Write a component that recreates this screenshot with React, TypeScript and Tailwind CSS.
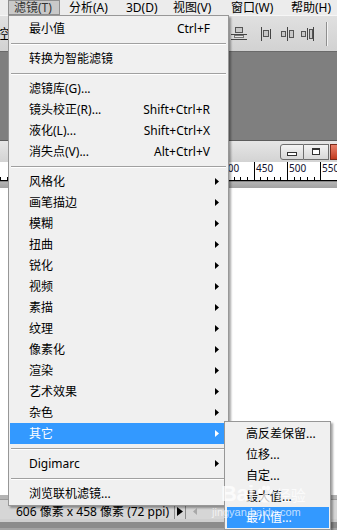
import React from 'react';

type Entry =
  | { label: string; shortcut?: string; arrow?: boolean; active?: boolean }
  | 'sep';

const filterMenu: Entry[] = [
  { label: '最小值', shortcut: 'Ctrl+F' },
  'sep',
  { label: '转换为智能滤镜' },
  'sep',
  { label: '滤镜库(G)...' },
  { label: '镜头校正(R)...', shortcut: 'Shift+Ctrl+R' },
  { label: '液化(L)...', shortcut: 'Shift+Ctrl+X' },
  { label: '消失点(V)...', shortcut: 'Alt+Ctrl+V' },
  'sep',
  { label: '风格化', arrow: true },
  { label: '画笔描边', arrow: true },
  { label: '模糊', arrow: true },
  { label: '扭曲', arrow: true },
  { label: '锐化', arrow: true },
  { label: '视频', arrow: true },
  { label: '素描', arrow: true },
  { label: '纹理', arrow: true },
  { label: '像素化', arrow: true },
  { label: '渲染', arrow: true },
  { label: '艺术效果', arrow: true },
  { label: '杂色', arrow: true },
  { label: '其它', arrow: true, active: true },
  'sep',
  { label: 'Digimarc', arrow: true },
  'sep',
  { label: '浏览联机滤镜...' },
];

const otherMenu = ['高反差保留...', '位移...', '自定...', '最大值...', '最小值...'];

function Arrow({ white }: { white?: boolean }) {
  return (
    <svg width="4" height="7" viewBox="0 0 4 7" className="ml-[5px]">
      <polygon points="0,0 4,3.5 0,7" fill={white ? '#ffffff' : '#000000'} />
    </svg>
  );
}

function MenuRow({ item }: { item: Exclude<Entry, 'sep'> }) {
  return (
    <div
      className={`mx-[1px] flex h-[21px] items-center pl-[19px] ${
        item.active ? 'bg-[#3399ff] text-white' : 'text-black'
      }`}
    >
      <span className="flex-1 whitespace-nowrap">{item.label}</span>
      {item.shortcut && <span className="whitespace-nowrap">{item.shortcut}</span>}
      <span className="flex w-[17px] items-center">{item.arrow && <Arrow white={item.active} />}</span>
    </div>
  );
}

function Separator() {
  return (
    <div className="flex h-[9px] items-start px-[2px] pt-[4px]">
      <div className="h-[2px] w-full border-t border-b border-t-[#a0a0a0] border-b-white" />
    </div>
  );
}

function ToolIcons() {
  return (
    <div className="ml-auto flex items-center">
      <svg width="16" height="14" viewBox="0 0 16 14" className="mr-[13px]">
        <rect x="4.5" y="0.5" width="7" height="5" fill="#c8c8c8" stroke="#555" />
        <line x1="0" y1="7.5" x2="16" y2="7.5" stroke="#444" />
        <rect x="3.5" y="8.5" width="9" height="2" fill="#e8e8e8" stroke="#777" />
        <line x1="0" y1="12.5" x2="16" y2="12.5" stroke="#444" />
      </svg>
      <svg width="13" height="14" viewBox="0 0 13 14" className="mr-[8px]">
        <line x1="1.5" y1="0" x2="1.5" y2="14" stroke="#444" />
        <rect x="3.5" y="3.5" width="5" height="6" fill="#c8c8c8" stroke="#555" />
        <line x1="10.5" y1="2" x2="10.5" y2="12" stroke="#444" />
      </svg>
      <svg width="13" height="14" viewBox="0 0 13 14" className="mr-[7px]">
        <rect x="0.5" y="4.5" width="4" height="5" fill="#c8c8c8" stroke="#555" />
        <line x1="6.5" y1="0" x2="6.5" y2="14" stroke="#444" />
        <rect x="8.5" y="3.5" width="4" height="7" fill="#c8c8c8" stroke="#555" />
      </svg>
      <svg width="13" height="14" viewBox="0 0 13 14" className="mr-[12px]">
        <rect x="0.5" y="4.5" width="4" height="5" fill="#c8c8c8" stroke="#555" />
        <line x1="6.5" y1="1" x2="6.5" y2="13" stroke="#444" />
        <rect x="8.5" y="2.5" width="3" height="9" fill="#c8c8c8" stroke="#555" />
        <line x1="12.5" y1="0" x2="12.5" y2="14" stroke="#444" />
      </svg>
      <div className="h-[24px] w-[2px] border-l border-r border-l-[#8e8e8e] border-r-[#f4f4f4]" />
      <div className="w-[9px]" />
    </div>
  );
}

function Ruler() {
  const majors = [0, 1, 2, 3].map((k) => 220.3 + k * 33.33);
  const labels = ['400', '450', '500', '550'];
  const minors: number[] = [];
  for (let x = 0; x < 337; x += 6.666) minors.push(x + 220.3 - 33.33 * 7);
  return (
    <svg width="337" height="19" viewBox="0 0 337 19" className="block">
      <rect width="337" height="19" fill="#ffffff" />
      {minors.map((x, i) => (
        <line key={i} x1={Math.round(x) + 0.5} y1={i % 5 === 0 ? 0 : 15} x2={Math.round(x) + 0.5} y2="19" stroke="#000" />
      ))}
      {majors.map((x, i) => (
        <text key={i} x={Math.round(x) + 2} y="10" fontSize="10" fill="#101030" fontFamily="'Noto Sans', sans-serif">
          {labels[i]}
        </text>
      ))}
      <line x1="0" y1="18.5" x2="337" y2="18.5" stroke="#000" />
    </svg>
  );
}

export default function App() {
  return (
    <div
      className="relative h-[530px] w-[337px] overflow-hidden bg-white text-[12px] leading-none select-none"
      style={{ fontFamily: "'Noto Sans', 'Noto Sans CJK SC', sans-serif" }}
    >
      {/* menu bar */}
      <div className="flex h-[15px] items-stretch bg-[#ececec] text-black">
        <div className="ml-[8px] flex w-[52px] items-center border border-[#8f8f8f] bg-[#c9c9c9] pl-[5px] text-[#333]">
          滤镜(T)
        </div>
        <span className="ml-[9px] flex w-[57px] items-center">分析(A)</span>
        <span className="flex w-[47px] items-center">3D(D)</span>
        <span className="flex w-[58px] items-center">视图(V)</span>
        <span className="flex w-[60px] items-center">窗口(W)</span>
        <span className="flex items-center">帮助(H)</span>
      </div>

      {/* options toolbar */}
      <div className="flex h-[36px] items-center border-t border-[#f6f6f6] bg-gradient-to-b from-[#e0e0e0] to-[#d2d2d2]">
        <span className="ml-[-4px] text-[13px] text-black">控</span>
        <ToolIcons />
      </div>

      {/* workspace */}
      <div className="h-[89px] border-t border-[#6a6a6a] bg-[#7f7f7f]" />

      {/* document title bar */}
      <div className="flex h-[22px] items-center border-t border-[#5c5c5c] bg-gradient-to-b from-[#e6e6e6] to-[#d3d3d3]">
        <span className="ml-[-44px] whitespace-nowrap text-black">(RGB/8)</span>
        <div className="ml-auto flex h-[16px] items-stretch">
          <div className="flex w-[24px] items-center justify-center rounded-l-[3px] border border-[#6e6e6e] bg-gradient-to-b from-[#f4f4f4] to-[#d8d8d8]">
            <div className="mt-[5px] h-[4px] w-[10px] border border-[#333] bg-white" />
          </div>
          <div className="flex w-[25px] items-center justify-center border-y border-r border-[#6e6e6e] bg-gradient-to-b from-[#f4f4f4] to-[#d8d8d8]">
            <div className="h-[7px] w-[8px] border border-t-2 border-[#333] bg-white" />
          </div>
          <div className="ml-[1px] w-[24px] mr-[-17px] border border-[#7a2a1a] bg-gradient-to-b from-[#e8806a] to-[#c2391c]" />
        </div>
      </div>

      {/* ruler */}
      <Ruler />
      <div className="h-[7px] border-t border-[#888] bg-gradient-to-b from-[#b4b4b4] to-[#a2a2a2]" />

      {/* canvas */}
      <div className="h-[307px] bg-white" />
      <div className="h-[4px] bg-[#b3b3b3]" />

      {/* status bar */}
      <div className="flex h-[20px] items-center border-t border-[#9a9a9a] bg-[#d6d6d6]">
        <span className="ml-[16px] mt-[4px] w-[158px] whitespace-nowrap text-black">606 像素 x 458 像素 (72 ppi)</span>
        <div className="flex h-full w-[12px] items-center justify-center border-x border-[#8a8a8a] pt-[3px]">
          <svg width="6" height="9" viewBox="0 0 6 9">
            <polygon points="0,0 6,4.5 0,9" fill="#000" />
          </svg>
        </div>
        <div className="ml-[7px] flex items-center pt-[3px]">
          <svg width="4" height="7" viewBox="0 0 4 7">
            <polygon points="4,0 0,3.5 4,7" fill="#a8a8a8" />
          </svg>
        </div>
      </div>
      <div className="h-[3px] bg-[#cfcfcf]" />
      <div className="h-[6px] bg-[#8c8c8c]" />
      <div className="h-[2px] bg-[#a4a4a4]" />

      {/* Filter menu */}
      <div className="absolute left-[8px] top-[15px] w-[221px] border border-[#979797] bg-[#f0f0f0] pt-[2px] pb-[1px] shadow-[2px_2px_2px_rgba(0,0,0,0.35)]">
        {filterMenu.map((item, i) =>
          item === 'sep' ? <Separator key={i} /> : <MenuRow key={i} item={item} />
        )}
      </div>

      {/* Other submenu */}
      <div className="absolute left-[224px] top-[421px] w-[107px] border border-[#979797] bg-[#f0f0f0] pt-[1px] pb-[1px] shadow-[2px_2px_2px_rgba(0,0,0,0.35)]">
        {otherMenu.map((label, i) => (
          <div
            key={i}
            className={`ml-[2px] mr-[1px] flex h-[21px] items-center pl-[19px] whitespace-nowrap ${
              i === otherMenu.length - 1 ? 'bg-[#3399ff] text-white' : 'text-black'
            }`}
          >
            {label}
          </div>
        ))}
      </div>

      {/* watermark */}
      <div className="pointer-events-none absolute left-[221px] top-[483px] flex items-end text-white/75">
        <span className="text-[22px] font-bold leading-none tracking-[-0.5px]" style={{ fontFamily: "'Liberation Sans', sans-serif" }}>
          Bai
        </span>
        <svg width="20" height="20" viewBox="0 0 20 20" className="mx-[1px] mb-[1px]">
          <g fill="rgba(255,255,255,0.75)">
            <ellipse cx="5" cy="7" rx="2" ry="2.6" />
            <ellipse cx="9" cy="4" rx="2" ry="2.6" />
            <ellipse cx="13" cy="4" rx="2" ry="2.6" />
            <ellipse cx="16.5" cy="8" rx="2" ry="2.6" />
            <path d="M5 17 C5 12 8 9.5 10.5 9.5 C13 9.5 16 12 16 17 C13 19 8 19 5 17 Z" />
          </g>
        </svg>
        <span className="mb-[2px] text-[15px] leading-none">经验</span>
      </div>
      <div
        className="pointer-events-none absolute left-[212px] top-[507px] whitespace-nowrap text-[11px] leading-none text-white/70"
        style={{ fontFamily: "'Liberation Sans', sans-serif" }}
      >
        jingyan.baidu.com
      </div>
    </div>
  );
}
